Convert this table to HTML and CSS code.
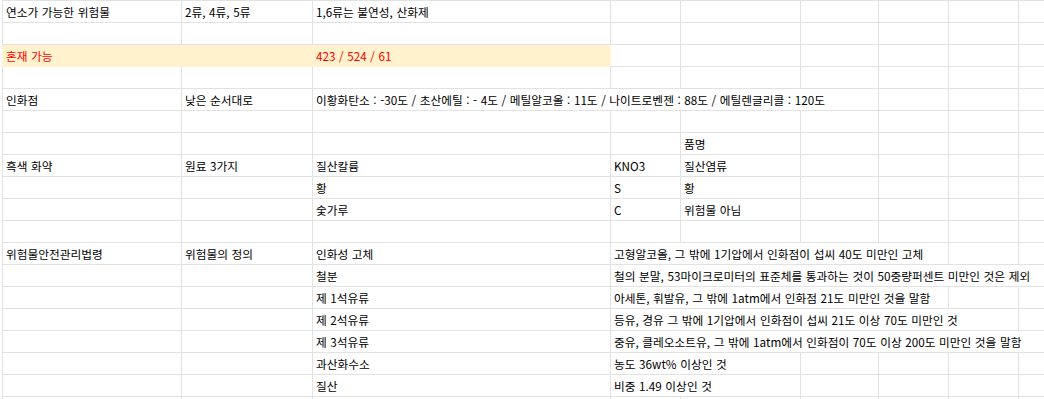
FILE: index.html
```html
<!DOCTYPE html>
<html lang="ko">
<head>
<meta charset="utf-8">
<link rel="stylesheet" href="styles.css">
</head>
<body>
<div class="sheet">
  <!-- row 0 -->
  <div class="c f">연소가 가능한 위험물</div><div class="c">2류, 4류, 5류</div><div class="c">1,6류는 불연성, 산화제</div><div class="c"></div><div class="c"></div><div class="c"></div><div class="c"></div><div class="c"></div><div class="c"></div>
  <!-- row 1 -->
  <div class="c f"></div><div class="c"></div><div class="c"></div><div class="c"></div><div class="c"></div><div class="c"></div><div class="c"></div><div class="c"></div><div class="c"></div>
  <!-- row 2 -->
  <div class="c f hl red">혼재 가능</div><div class="c hl"></div><div class="c hl red">423 / 524 / 61</div><div class="c"></div><div class="c"></div><div class="c"></div><div class="c"></div><div class="c"></div><div class="c"></div>
  <!-- row 3 -->
  <div class="c f"></div><div class="c"></div><div class="c"></div><div class="c"></div><div class="c"></div><div class="c"></div><div class="c"></div><div class="c"></div><div class="c"></div>
  <!-- row 4 -->
  <div class="c f">인화점</div><div class="c">낮은 순서대로</div><div class="c s4">이황화탄소 : -30도 / 초산에틸 : - 4도 / 메틸알코올 : 11도 / 나이트로벤젠 : 88도 / 에틸렌글리콜 : 120도</div><div class="c"></div><div class="c"></div><div class="c"></div>
  <!-- row 5 -->
  <div class="c f"></div><div class="c"></div><div class="c"></div><div class="c"></div><div class="c"></div><div class="c"></div><div class="c"></div><div class="c"></div><div class="c"></div>
  <!-- row 6 -->
  <div class="c f"></div><div class="c"></div><div class="c"></div><div class="c"></div><div class="c">품명</div><div class="c"></div><div class="c"></div><div class="c"></div><div class="c"></div>
  <!-- row 7 -->
  <div class="c f">흑색 화약</div><div class="c">원료 3가지</div><div class="c">질산칼륨</div><div class="c">KNO3</div><div class="c">질산염류</div><div class="c"></div><div class="c"></div><div class="c"></div><div class="c"></div>
  <!-- row 8 -->
  <div class="c f"></div><div class="c"></div><div class="c">황</div><div class="c">S</div><div class="c">황</div><div class="c"></div><div class="c"></div><div class="c"></div><div class="c"></div>
  <!-- row 9 -->
  <div class="c f"></div><div class="c"></div><div class="c">숯가루</div><div class="c">C</div><div class="c">위험물 아님</div><div class="c"></div><div class="c"></div><div class="c"></div><div class="c"></div>
  <!-- row 10 -->
  <div class="c f"></div><div class="c"></div><div class="c"></div><div class="c"></div><div class="c"></div><div class="c"></div><div class="c"></div><div class="c"></div><div class="c"></div>
  <!-- row 11 -->
  <div class="c f">위험물안전관리법령</div><div class="c">위험물의 정의</div><div class="c">인화성 고체</div><div class="c s4">고형알코올, 그 밖에 1기압에서 인화점이 섭씨 40도 미만인 고체</div><div class="c"></div><div class="c"></div>
  <!-- row 12 -->
  <div class="c f"></div><div class="c"></div><div class="c">철분</div><div class="c s6">철의 분말, 53마이크로미터의 표준체를 통과하는 것이 50중량퍼센트 미만인 것은 제외</div>
  <!-- row 13 -->
  <div class="c f"></div><div class="c"></div><div class="c">제 1석유류</div><div class="c s4">아세톤, 휘발유, 그 밖에 1atm에서 인화점 21도 미만인 것을 말함</div><div class="c"></div><div class="c"></div>
  <!-- row 14 -->
  <div class="c f"></div><div class="c"></div><div class="c">제 2석유류</div><div class="c s5">등유, 경유 그 밖에 1기압에서 인화점이 섭씨 21도 이상 70도 미만인 것</div><div class="c"></div>
  <!-- row 15 -->
  <div class="c f"></div><div class="c"></div><div class="c">제 3석유류</div><div class="c s6">중유, 클레오소트유, 그 밖에 1atm에서 인화점이 70도 이상 200도 미만인 것을 말함</div>
  <!-- row 16 -->
  <div class="c f"></div><div class="c"></div><div class="c">과산화수소</div><div class="c s2">농도 36wt% 이상인 것</div><div class="c"></div><div class="c"></div><div class="c"></div><div class="c"></div>
  <!-- row 17 -->
  <div class="c f"></div><div class="c"></div><div class="c">질산</div><div class="c s2">비중 1.49 이상인 것</div><div class="c"></div><div class="c"></div><div class="c"></div><div class="c"></div>
  <!-- row 18 -->
  <div class="c f"></div><div class="c"></div><div class="c"></div><div class="c"></div><div class="c"></div><div class="c"></div><div class="c"></div><div class="c"></div><div class="c"></div>
</div>
</body>
</html>
```

FILE: styles.css
```css
html, body {
  margin: 0;
  padding: 0;
  background: #ffffff;
  overflow: hidden;
}

body {
  width: 1044px;
  height: 399px;
}

.sheet {
  display: grid;
  grid-template-columns: 180px 131px 298px 70px 120px 78px 70px 70px 90px;
  grid-auto-rows: 22px;
  width: 1107px;
  margin-left: 2px;
  border-top: 1px solid #e2e2e2;
  font-family: "Noto Sans CJK KR", "Noto Sans", sans-serif;
  font-size: 11.7px;
  word-spacing: 0.3px;
  color: #000000;
}

.c {
  box-sizing: border-box;
  border-right: 1px solid #e2e2e2;
  border-bottom: 1px solid #e2e2e2;
  padding-left: 3px;
  line-height: 21px;
  white-space: nowrap;
  overflow: hidden;
}

.f {
  border-left: 1px solid #e2e2e2;
}

.hl {
  background: #fff2cc;
  border-color: #fff2cc;
}

.red {
  color: #ff0000;
}

.s2 { grid-column: span 2; }
.s4 { grid-column: span 4; }
.s5 { grid-column: span 5; }
.s6 { grid-column: span 6; }
```
